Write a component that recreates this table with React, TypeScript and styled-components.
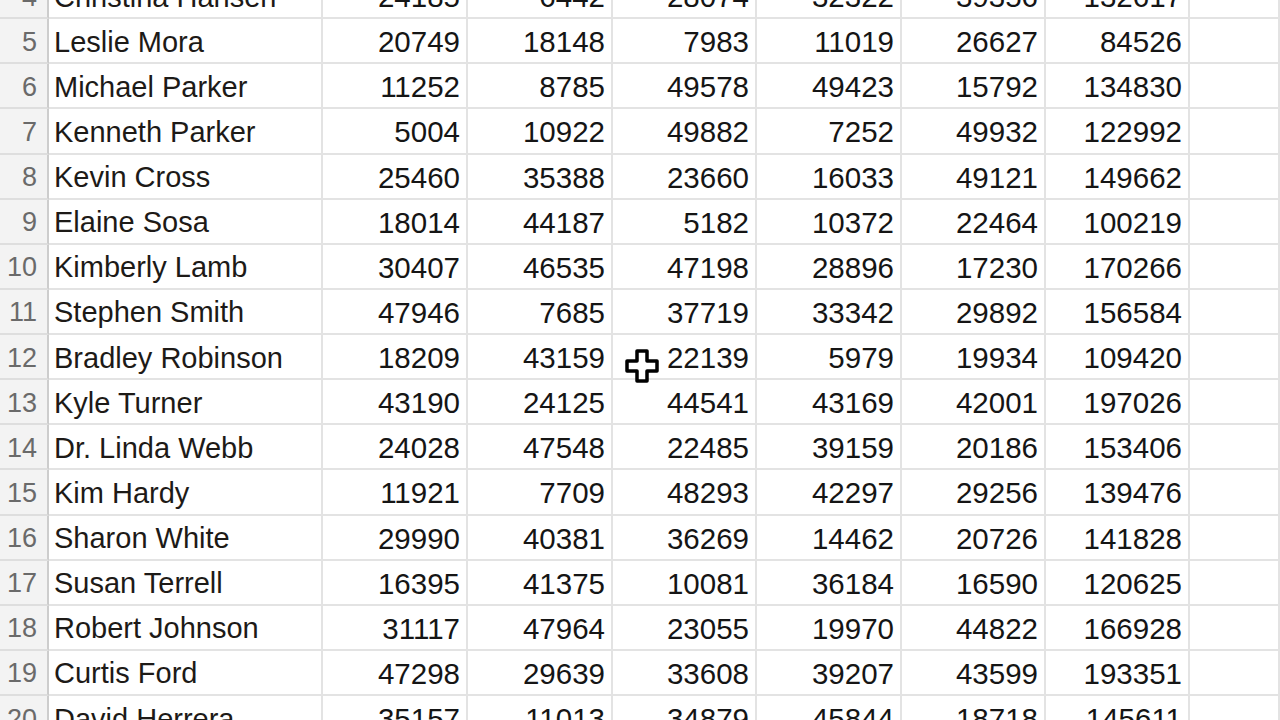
import React from "react";
import styled, { createGlobalStyle } from "styled-components";

const Global = createGlobalStyle`
  html, body {
    margin: 0;
    padding: 0;
    background: #ffffff;
    overflow: hidden;
    width: 1280px;
    height: 720px;
  }
`;

const Page = styled.div`
  position: relative;
  width: 1280px;
  height: 720px;
  overflow: hidden;
  background: #ffffff;
`;

const Sheet = styled.div`
  display: flex;
  flex-direction: column;
  margin-top: -26px;
`;

const Row = styled.div`
  display: grid;
  grid-template-columns: 49px 274px 145px 145px 144px 145px 144px 144px 1fr;
  height: 45.14px;
`;

const RowHead = styled.div`
  box-sizing: border-box;
  background: #f3f3f3;
  border-right: 2px solid #cdcdcd;
  border-bottom: 2px solid #dedede;
  display: flex;
  align-items: center;
  justify-content: flex-end;
  padding: 3px 10px 0 0;
  font-family: "Liberation Sans", Arial, sans-serif;
  font-size: 27px;
  color: #6a6a6a;
`;

const Cell = styled.div<{ $num?: boolean }>`
  box-sizing: border-box;
  border-right: 2px solid #e3e3e3;
  border-bottom: 2px solid #e3e3e3;
  display: flex;
  align-items: center;
  justify-content: ${(p) => (p.$num ? "flex-end" : "flex-start")};
  padding: ${(p) => (p.$num ? "3px 6px 0 0" : "3px 0 0 5px")};
  font-family: "Liberation Sans", Arial, sans-serif;
  font-size: ${(p) => (p.$num ? "29.5px" : "29px")};
  color: ${(p) => (p.$num ? "#151515" : "#1d1a17")};
  white-space: nowrap;
  overflow: visible;
`;

const Cursor = styled.svg`
  position: absolute;
  left: 624px;
  top: 348px;
  width: 36px;
  height: 36px;
`;

const rows: [number, string, number[]][] = [
  [4, "Christina Hansen", [24185, 6442, 28074, 32322, 39356, 132617]],
  [5, "Leslie Mora", [20749, 18148, 7983, 11019, 26627, 84526]],
  [6, "Michael Parker", [11252, 8785, 49578, 49423, 15792, 134830]],
  [7, "Kenneth Parker", [5004, 10922, 49882, 7252, 49932, 122992]],
  [8, "Kevin Cross", [25460, 35388, 23660, 16033, 49121, 149662]],
  [9, "Elaine Sosa", [18014, 44187, 5182, 10372, 22464, 100219]],
  [10, "Kimberly Lamb", [30407, 46535, 47198, 28896, 17230, 170266]],
  [11, "Stephen Smith", [47946, 7685, 37719, 33342, 29892, 156584]],
  [12, "Bradley Robinson", [18209, 43159, 22139, 5979, 19934, 109420]],
  [13, "Kyle Turner", [43190, 24125, 44541, 43169, 42001, 197026]],
  [14, "Dr. Linda Webb", [24028, 47548, 22485, 39159, 20186, 153406]],
  [15, "Kim Hardy", [11921, 7709, 48293, 42297, 29256, 139476]],
  [16, "Sharon White", [29990, 40381, 36269, 14462, 20726, 141828]],
  [17, "Susan Terrell", [16395, 41375, 10081, 36184, 16590, 120625]],
  [18, "Robert Johnson", [31117, 47964, 23055, 19970, 44822, 166928]],
  [19, "Curtis Ford", [47298, 29639, 33608, 39207, 43599, 193351]],
  [20, "David Herrera", [35157, 11013, 34879, 45844, 18718, 145611]],
];

export default function App() {
  return (
    <Page>
      <Global />
      <Sheet>
        {rows.map(([n, name, vals]) => (
          <Row key={n}>
            <RowHead>{n}</RowHead>
            <Cell>{name}</Cell>
            {vals.map((v, i) => (
              <Cell key={i} $num>
                {v}
              </Cell>
            ))}
            <Cell />
          </Row>
        ))}
      </Sheet>
      <Cursor viewBox="0 0 36 36">
        <path
          d="M13 3 H23 V13 H33 V23 H23 V33 H13 V23 H3 V13 H13 Z"
          fill="#ffffff"
          stroke="#000000"
          strokeWidth="3.5"
          strokeLinejoin="round"
        />
      </Cursor>
    </Page>
  );
}
